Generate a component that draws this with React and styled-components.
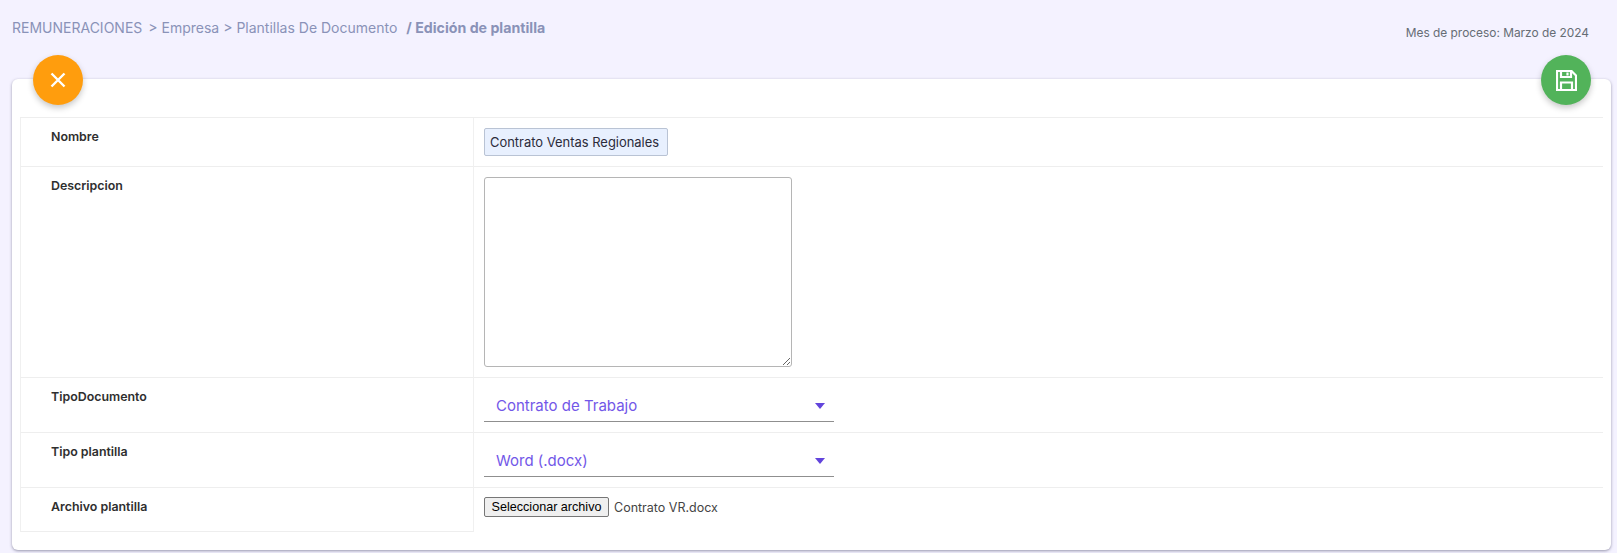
import React from "react";
import styled, { createGlobalStyle } from "styled-components";

const Global = createGlobalStyle`
  html, body { margin: 0; padding: 0; background: #f4f2ff; }
  body { font-family: Inter, "Liberation Sans", sans-serif; color: #333; }
  * { box-sizing: border-box; }
`;

const Page = styled.div`
  width: 1617px;
  height: 553px;
  padding: 0 6px 3px 12px;
  background: #f4f2ff;
`;

const Header = styled.header`
  height: 79px;
  display: flex;
  justify-content: space-between;
  align-items: flex-start;
`;

const Breadcrumb = styled.nav`
  margin-top: 19px;
  font-size: 14px;
  line-height: 17px;
  color: #8a92b8;
  white-space: pre;
`;

const Crumb = styled.span`
  margin-left: ${(p) => p.$gap || 0}px;
`;

const Current = styled.strong`
  margin-left: 9px;
  font-size: 14.2px;
  font-weight: 700;
`;

const Period = styled.div`
  margin-top: 24px;
  margin-right: 22px;
  font-size: 11.9px;
  line-height: 17px;
  color: #666d75;
`;

const Card = styled.main`
  position: relative;
  height: 471px;
  padding: 38px 8px 0;
  background: #fff;
  border-radius: 6px;
  box-shadow: 0 1px 3px rgba(60, 60, 90, 0.5);
`;

const Fab = styled.button`
  position: absolute;
  top: -24px;
  ${(p) => (p.$side === "left" ? "left: 21px;" : "right: 20px;")}
  width: 50px;
  height: 50px;
  padding: 0;
  border: 0;
  border-radius: 50%;
  display: flex;
  align-items: center;
  justify-content: center;
  color: #fff;
  background: ${(p) => p.$color};
  box-shadow: 0 3px 6px rgba(0, 0, 0, 0.22);
`;

const Table = styled.div`
  display: grid;
  grid-template-columns: 454px 1fr;
  border-top: 1px solid #eeeeee;
`;

const LabelCell = styled.div`
  height: ${(p) => p.$h}px;
  padding: 11px 0 0 30px;
  font-size: 12.4px;
  line-height: 16px;
  font-weight: 600;
  color: #2f2f2f;
  border-left: 1px solid #f0f0f0;
  border-right: 1px solid #f0f0f0;
  border-bottom: 1px solid #eeeeee;
`;

const ValueCell = styled.div`
  height: ${(p) => p.$h}px;
  padding: ${(p) => p.$pt ?? 10}px 0 0 10px;
  border-bottom: ${(p) => (p.$last ? "0" : "1px solid #eeeeee")};
`;

const NameInput = styled.div`
  display: inline-block;
  height: 28px;
  padding: 0 8px 0 5px;
  font-size: 12.95px;
  line-height: 26px;
  color: #2b2b3a;
  background: #e8f0fe;
  border: 1px solid #b9c3d4;
  border-radius: 2px;
`;

const Area = styled.textarea`
  display: block;
  width: 308px;
  height: 190px;
  background: #fff;
  border: 1px solid #b5b5b5;
  border-radius: 3px;
`;

const Select = styled.div`
  width: 350px;
  height: 37px;
  padding: 5px 9px 0 12px;
  display: flex;
  align-items: center;
  justify-content: space-between;
  font-size: 15px;
  color: #7257e8;
  border-bottom: 1px solid #8f8f8f;
`;

const Caret = styled.span`
  width: 0;
  height: 0;
  border-left: 5px solid transparent;
  border-right: 5px solid transparent;
  border-top: 6px solid #6244dc;
`;

const FileRow = styled.div`
  display: flex;
  align-items: center;
  gap: 5px;
  font-size: 12.5px;
  color: #444;
`;

const FileButton = styled.button`
  height: 20px;
  width: 125px;
  padding: 0;
  font-family: "Liberation Sans", Arial, sans-serif;
  font-size: 12.6px;
  color: #000;
  background: #efefef;
  border: 1px solid #767676;
  border-radius: 2px;
`;

const CloseIcon = () => (
  <svg width="24" height="24" viewBox="0 0 24 24" fill="none" stroke="currentColor" strokeWidth="2.4">
    <path d="M5.5 5.5 L18.5 18.5 M18.5 5.5 L5.5 18.5" />
  </svg>
);

const SaveIcon = () => (
  <svg width="21" height="21" viewBox="0 0 21 21" fill="none" stroke="currentColor" strokeWidth="2.2">
    <path d="M1 1 H15.5 L20 5.5 V20 H1 Z" />
    <path d="M5 1 V7 H15 V1" />
    <path d="M11.5 2.5 V5.5" />
    <path d="M5 20 V12.5 H16 V20" />
  </svg>
);

const rows = [
  { label: "Nombre", h: 49 },
  { label: "Descripcion", h: 211 },
  { label: "TipoDocumento", h: 55 },
  { label: "Tipo plantilla", h: 55 },
  { label: "Archivo plantilla", h: 44 },
];

const SelectField = ({ value }) => (
  <Select>
    {value}
    <Caret />
  </Select>
);

export default function App() {
  return (
    <>
      <Global />
      <Page>
        <Header>
          <Breadcrumb>
            <Crumb>REMUNERACIONES</Crumb>
            <Crumb $gap={6}>&gt; Empresa</Crumb>
            <Crumb $gap={4}>&gt; Plantillas De Documento</Crumb>
            <Current>/ Edición de plantilla</Current>
          </Breadcrumb>
          <Period>Mes de proceso: Marzo de 2024</Period>
        </Header>
        <Card>
          <Fab $side="left" $color="#ff9d0d" aria-label="Cerrar"><CloseIcon /></Fab>
          <Fab $side="right" $color="#52b35a" aria-label="Guardar"><SaveIcon /></Fab>
          <Table>
            <LabelCell $h={rows[0].h}>{rows[0].label}</LabelCell>
            <ValueCell $h={rows[0].h}><NameInput>Contrato Ventas Regionales</NameInput></ValueCell>
            <LabelCell $h={rows[1].h}>{rows[1].label}</LabelCell>
            <ValueCell $h={rows[1].h}><Area /></ValueCell>
            <LabelCell $h={rows[2].h}>{rows[2].label}</LabelCell>
            <ValueCell $h={rows[2].h} $pt={7}><SelectField value="Contrato de Trabajo" /></ValueCell>
            <LabelCell $h={rows[3].h}>{rows[3].label}</LabelCell>
            <ValueCell $h={rows[3].h} $pt={7}><SelectField value="Word (.docx)" /></ValueCell>
            <LabelCell $h={rows[4].h}>{rows[4].label}</LabelCell>
            <ValueCell $h={rows[4].h} $pt={9} $last>
              <FileRow>
                <FileButton>Seleccionar archivo</FileButton>
                Contrato VR.docx
              </FileRow>
            </ValueCell>
          </Table>
        </Card>
      </Page>
    </>
  );
}
